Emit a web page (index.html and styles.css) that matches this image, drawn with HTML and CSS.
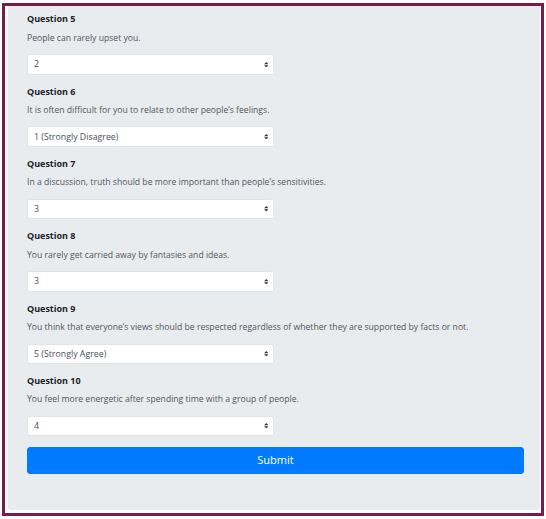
FILE: index.html
```html
<!DOCTYPE html>
<html>
<head>
<meta charset="utf-8">
<link rel="stylesheet" href="styles.css">
</head>
<body>
<div class="frame">
  <div class="panel">
    <form class="quiz">
      <div class="group">
        <label class="q-label">Question 5</label>
        <p class="q-text">People can rarely upset you.</p>
        <div class="select-wrap">
          <select class="q-select"><option>2</option></select>
          <svg class="arrows" viewBox="0 0 4 5" width="5" height="6"><path d="M2 0L0 2h4zm0 5L0 3h4z" fill="#343a40"/></svg>
        </div>
      </div>
      <div class="group">
        <label class="q-label">Question 6</label>
        <p class="q-text">It is often difficult for you to relate to other people’s feelings.</p>
        <div class="select-wrap">
          <select class="q-select"><option>1 (Strongly Disagree)</option></select>
          <svg class="arrows" viewBox="0 0 4 5" width="5" height="6"><path d="M2 0L0 2h4zm0 5L0 3h4z" fill="#343a40"/></svg>
        </div>
      </div>
      <div class="group">
        <label class="q-label">Question 7</label>
        <p class="q-text">In a discussion, truth should be more important than people’s sensitivities.</p>
        <div class="select-wrap">
          <select class="q-select"><option>3</option></select>
          <svg class="arrows" viewBox="0 0 4 5" width="5" height="6"><path d="M2 0L0 2h4zm0 5L0 3h4z" fill="#343a40"/></svg>
        </div>
      </div>
      <div class="group">
        <label class="q-label">Question 8</label>
        <p class="q-text">You rarely get carried away by fantasies and ideas.</p>
        <div class="select-wrap">
          <select class="q-select"><option>3</option></select>
          <svg class="arrows" viewBox="0 0 4 5" width="5" height="6"><path d="M2 0L0 2h4zm0 5L0 3h4z" fill="#343a40"/></svg>
        </div>
      </div>
      <div class="group">
        <label class="q-label">Question 9</label>
        <p class="q-text">You think that everyone’s views should be respected regardless of whether they are supported by facts or not.</p>
        <div class="select-wrap">
          <select class="q-select"><option>5 (Strongly Agree)</option></select>
          <svg class="arrows" viewBox="0 0 4 5" width="5" height="6"><path d="M2 0L0 2h4zm0 5L0 3h4z" fill="#343a40"/></svg>
        </div>
      </div>
      <div class="group">
        <label class="q-label">Question 10</label>
        <p class="q-text">You feel more energetic after spending time with a group of people.</p>
        <div class="select-wrap">
          <select class="q-select"><option>4</option></select>
          <svg class="arrows" viewBox="0 0 4 5" width="5" height="6"><path d="M2 0L0 2h4zm0 5L0 3h4z" fill="#343a40"/></svg>
        </div>
      </div>
      <button type="button" class="submit">Submit</button>
    </form>
  </div>
</div>
</body>
</html>
```

FILE: styles.css
```css
* { box-sizing: border-box; }
html, body { margin: 0; padding: 0; background: #ffffff; }
body {
  font-family: "Open Sans", "Noto Sans", sans-serif;
  font-size: 9px;
  line-height: 1.5;
  color: #212529;
}
.frame {
  margin: 3px 0 0 2px;
  width: 542px;
  height: 513px;
  border: 3px solid #7a1c4a;
  background: #ffffff;
  display: flex;
  flex-direction: column;
}
.panel {
  margin: 0 1px 3px 3px;
  flex: 1;
  background: #e9ecef;
  border-radius: 0 0 3px 3px;
  padding: 6.25px 16px 0 19px;
}
.quiz { display: flex; flex-direction: column; }
.group { display: flex; flex-direction: column; margin-bottom: 10.15px; }
.q-label {
  font-weight: 700;
  line-height: 13.5px;
  margin-bottom: 5.75px;
  color: #212529;
}
.q-text {
  margin: 0 0 9px 0;
  font-size: 8.65px;
  line-height: 13.5px;
  color: #50575e;
}
.select-wrap {
  position: relative;
  width: 247px;
}
.q-select {
  -webkit-appearance: none;
  appearance: none;
  width: 100%;
  height: 20.5px;
  border: 1px solid #e1e5e9;
  border-radius: 2.5px;
  background: #ffffff;
  color: #495057;
  font-family: inherit;
  font-size: 8.8px;
  padding: 0 16px 0 6px;
  outline: none;
}
.arrows {
  position: absolute;
  right: 6px;
  top: 7.5px;
  width: 4.5px;
  height: 5.5px;
}
.submit {
  width: 497px;
  height: 27px;
  margin-top: 0.35px;
  border: 1px solid #007bff;
  border-radius: 3px;
  background: #007bff;
  color: #ffffff;
  font-family: inherit;
  font-size: 11px;
  line-height: 1.5;
  padding: 0;
}
```
